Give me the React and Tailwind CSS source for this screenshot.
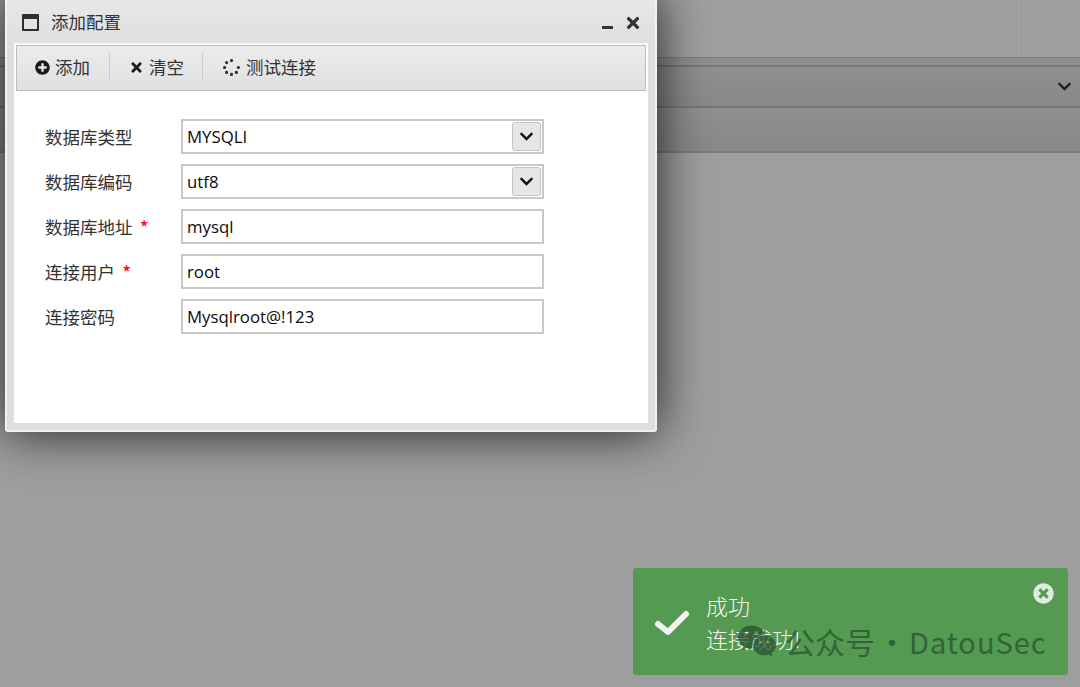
import React from 'react';
import { FaPlusCircle, FaTimes, FaChevronDown, FaSpinner, FaTimesCircle, FaWeixin } from 'react-icons/fa';

const cjk = "font-['Noto_Sans_CJK_SC','DejaVu_Sans',sans-serif]";
const fieldText = "font-['Open_Sans','Noto_Sans_CJK_SC',sans-serif]";

const fields = [
  { label: '数据库类型', value: 'MYSQLI', select: true },
  { label: '数据库编码', value: 'utf8', select: true },
  { label: '数据库地址', value: 'mysql', required: true },
  { label: '连接用户', value: 'root', required: true },
  { label: '连接密码', value: 'Mysqlroot@!123' },
];

const Field = ({ label, value, select, required }) => (
  <div className="flex items-center h-[35px]">
    <div className="w-[136px] mt-[2px] flex items-center text-[17.5px] text-[#333]">
      <span>{label}</span>
      {required && <span className="ml-[7px] text-[20px] leading-[20px] text-[#f00]">*</span>}
    </div>
    <div className="w-[363px] h-[35px] border-2 border-[#c8c8c8] bg-white flex items-center justify-between pl-[4px] pr-[1px]">
      <span className={`${fieldText} text-[16.8px] mt-px text-[#0a0a0a]`}>{value}</span>
      {select && (
        <span className="w-[29px] h-[29px] flex items-center justify-center rounded-[3px] border border-[#c4c4c4] bg-[#e6e6e6] text-[#111]">
          <FaChevronDown size={15} />
        </span>
      )}
    </div>
  </div>
);

const ToolButton = ({ icon, label, className }) => (
  <div className={`flex items-center text-[17.5px] text-[#333] ${className}`}>
    {icon}
    <span>{label}</span>
  </div>
);

const Divider = () => <div className="w-px h-[29px] bg-[#c3d0d3]" />;

export default function App() {
  return (
    <div className={`relative w-[1080px] h-[687px] overflow-hidden bg-[#9e9e9e] ${cjk}`}>
      {/* page behind the mask */}
      <div className="h-[59px] bg-[#9f9f9f] border-b-2 border-[#7b7b7b] flex justify-end">
        <div className="w-[59px] border-l border-[#979797]" />
      </div>
      <div className="h-[9px] bg-[#8f8f8f] border-b-2 border-[#787878] -mt-px" />
      <div className="h-[41px] bg-gradient-to-b from-[#8f8f8f] to-[#888] border-b-2 border-[#787878] flex items-center justify-end pr-[8px] text-[#222]">
        <FaChevronDown size={15} />
      </div>
      <div className="h-[45px] bg-gradient-to-b from-[#8f8f8f] to-[#888] border-b-2 border-[#7b7b7b]" />

      {/* dialog */}
      <div className="absolute left-[5px] -top-[8px] w-[652px] h-[440px] rounded-[3px] border-2 border-[#f2f2f2] bg-[#dedede] shadow-[0_0_50px_rgba(0,0,0,0.8)] flex flex-col">
        <div className="h-[49px] pt-[8px] pl-[15px] pr-[13px] flex items-center bg-gradient-to-b from-[#e9e9e9] to-[#dfdfdf]">
          <div className="w-[17px] h-[17px] border-2 border-t-[5px] border-[#2e2e2e] rounded-[1px]" />
          <span className="ml-[12px] text-[17.5px] text-[#333]">添加配置</span>
          <div className="ml-auto flex items-center gap-[11px] text-[#333]">
            <div className="w-[11px] h-[3px] mt-[10px] bg-[#333]" />
            <FaTimes size={18} />
          </div>
        </div>
        <div className="mx-[7px] flex-1 bg-white border-t border-[#f7f7f7]">
          <div className="mx-[2px] mt-px h-[46px] pb-[1px] flex items-center bg-gradient-to-b from-[#ececec] to-[#e0e0e0] border border-[#bdbdbd]">
            <ToolButton className="pl-[18px] pr-[19px] gap-[5px]" icon={<FaPlusCircle size={15} className="text-[#1a1a1a]" />} label="添加" />
            <Divider />
            <ToolButton className="pl-[19px] pr-[18px] gap-[5px]" icon={<FaTimes size={15} className="text-[#1a1a1a]" />} label="清空" />
            <Divider />
            <ToolButton className="pl-[20px] gap-[6px]" icon={<FaSpinner size={17} className="text-[#333]" />} label="测试连接" />
          </div>
          <div className="pt-[28px] pl-[31px] flex flex-col gap-[10px]">
            {fields.map((f) => (
              <Field key={f.label} {...f} />
            ))}
          </div>
        </div>
        <div className="h-[7px]" />
      </div>

      {/* toast */}
      <div className="absolute left-[633px] top-[568px] w-[435px] h-[107px] rounded-[3px] bg-[#559a52] text-white flex items-center">
        <svg width="36" height="28" viewBox="0 0 36 28" className="ml-[21px] mt-[5px]">
          <path d="M4 14 L14 22 L32 4" fill="none" stroke="#f3f3f3" strokeWidth="6" strokeLinecap="round" strokeLinejoin="round" />
        </svg>
        <div className="ml-[16px] text-[22px] leading-[33px] font-light text-[#f4f4f4]">
          <div>成功</div>
          <div>连接成功!</div>
        </div>
        <FaTimesCircle size={21} className="absolute right-[14px] top-[15px] text-[#dfeadf]" />
      </div>

      {/* watermark */}
      <div className="absolute left-[737px] top-[621px] flex items-center text-[#27522f] opacity-75">
        <FaWeixin size={40} />
        <span className="ml-[8px] text-[30px] leading-[40px]">公众号</span>
        <span className="ml-[2px] w-[30px] text-[30px] leading-[40px] text-right">·</span>
        <span className="ml-[2px] text-[29px] leading-[40px] tracking-[1px]">DatouSec</span>
      </div>
    </div>
  );
}
